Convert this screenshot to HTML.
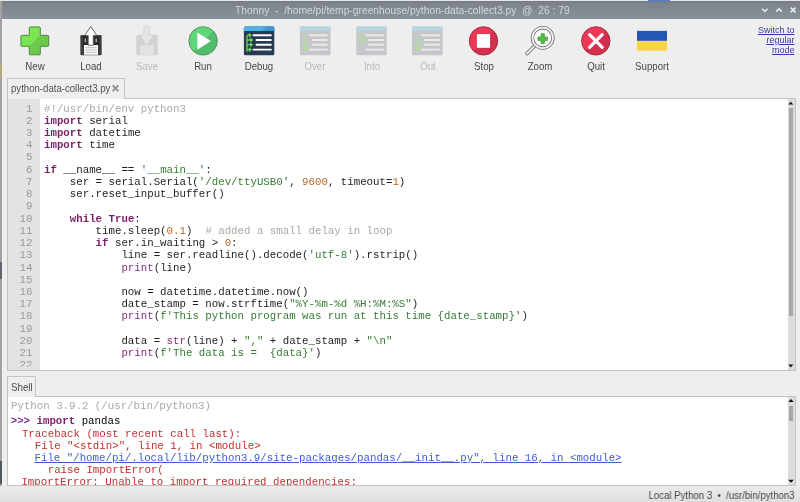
<!DOCTYPE html>
<html><head><meta charset="utf-8">
<style>
*{margin:0;padding:0;box-sizing:border-box}
html,body{width:800px;height:502px;overflow:hidden;background:#eeeeee;font-family:"Liberation Sans",sans-serif}
.abs{position:absolute}
#top{left:0;top:0;width:800px;height:1px;background:#e8e8e8}
#title{left:0;top:1px;width:800px;height:18px;background:linear-gradient(#737a82,#7c838b 12%,#8a9298)}
#title .t{position:absolute;left:234.5px;top:3.8px;font-size:10.4px;color:#d4d8dc;white-space:pre;transform:scaleX(0.99);transform-origin:0 0}
#lb{left:0;top:1px;width:2px;height:501px;background:#a2a2a2}
.lbl{position:absolute;top:60px;font-size:10.5px;color:#474747;text-align:center;width:60px;transform:scaleX(0.92)}
.dis{color:#b9b9b9}
.mono{font-family:"Liberation Mono",monospace;font-size:10.75px;white-space:pre}
#switch{position:absolute;right:5.6px;top:26.2px;font-size:9px;line-height:9.7px;color:#3a3aa4;text-align:right;text-decoration:underline;text-decoration-thickness:1px}
#tab{left:7px;top:78px;width:118px;border-top-right-radius:2px;height:21px;border:1px solid #c8c4bc;border-bottom:none;background:#efefef;z-index:2}
#tab .t{position:absolute;left:2.8px;top:3px;font-size:10.5px;color:#505050;white-space:pre;transform:scaleX(0.915);transform-origin:0 0}
#tab .x{position:absolute;left:104px;top:4px;font-size:9px;color:#8a8a8a}
#ed{left:7px;top:98px;width:789px;height:273px;border:1px solid #c6c2ba;background:#fff;overflow:hidden}
#gut{left:0;top:0;width:32px;height:272px;background:#e3e3e3}
#nums{position:absolute;left:0;top:3.5px;width:24.5px;text-align:right;color:#9a9a9a;line-height:12.23px}
#code{position:absolute;left:36px;top:3.5px;color:#1e1e1e;line-height:12.23px}
.kw{color:#7d1e68;font-weight:bold}
.st{color:#367c36}
.nu{color:#b8642a}
.cm{color:#a8a8a8}
.bi{color:#8e2e7e}
.sb{position:absolute;background:#dcdcdc}
.th{position:absolute;background:#a8a8a8}
#shtab{left:7px;top:376px;width:29px;height:21px;border:1px solid #c8c4bc;border-bottom:none;border-top-right-radius:2px;background:#efefef;z-index:2}
#shtab .t{position:absolute;left:2.7px;top:4px;font-size:10.5px;color:#4a4a4a;transform:scaleX(0.93);transform-origin:0 0}
#sh{left:7px;top:396px;width:789px;height:90px;border:1px solid #c6c2ba;background:#fff;overflow:hidden}
#shcode{position:absolute;left:4px;top:3px;line-height:12.3px}
.err{color:#c23030}
.ln{position:absolute;line-height:12.3px}
.lnk{color:#3a5fd0;text-decoration:underline}
.pr{color:#7a2a9a;font-weight:bold}
#status{position:absolute;right:5.8px;top:489px;font-size:10.5px;color:#474747;white-space:pre;transform:scaleX(0.915);transform-origin:100% 0}
</style></head><body><div id="root" style="position:absolute;left:0;top:0;width:800px;height:502px;overflow:hidden;will-change:transform">
<div id="top" class="abs"></div>
<div class="abs" style="left:648px;top:0;width:22px;height:1px;background:#4a80d8"></div>
<div id="title" class="abs"><span class="t">Thonny  -  /home/pi/temp-greenhouse/python-data-collect3.py  @  26 : 79</span></div>
<div id="lb" class="abs"></div>
<div class="abs" style="left:0;top:64px;width:2px;height:13px;background:#b4ac7c"></div>
<div class="abs" style="left:0;top:262px;width:2px;height:17px;background:#5c6672"></div>
<div class="abs" style="left:0;top:461px;width:2px;height:23px;background:#4c5c5a"></div>
<div class="abs" style="left:0;top:486px;width:800px;height:16px;background:linear-gradient(#ebebeb,#dfdfdf)"></div>

<svg class="abs" style="left:0;top:0" width="800" height="80" viewBox="0 0 800 80">
<defs>
<linearGradient id="gp" x1="0" y1="0" x2="1" y2="1"><stop offset="0.5" stop-color="#7ae553"/><stop offset="0.5" stop-color="#6cc949"/></linearGradient>
<linearGradient id="gr" x1="0" y1="0" x2="1" y2="1"><stop offset="0.5" stop-color="#60d67a"/><stop offset="0.5" stop-color="#54bd6c"/></linearGradient>
<linearGradient id="gs" x1="0" y1="0" x2="1" y2="1"><stop offset="0.5" stop-color="#ec3756"/><stop offset="0.5" stop-color="#d42f4c"/></linearGradient>
</defs>
<!-- New -->
<path d="M30.2,26.9 H39.4 Q40.3,26.9 40.3,27.799999999999997 V35.4 H47.800000000000004 Q48.7,35.4 48.7,36.3 V45.4 Q48.7,46.3 47.800000000000004,46.3 H40.3 V53.9 Q40.3,54.8 39.4,54.8 H30.2 Q29.3,54.8 29.3,53.9 V46.3 H21.799999999999997 Q20.9,46.3 20.9,45.4 V36.3 Q20.9,35.4 21.799999999999997,35.4 H29.3 V27.799999999999997 Q29.3,26.9 30.2,26.9 Z" fill="url(#gp)" stroke="#4b8a3c" stroke-width="1"/>
<!-- Load -->
<rect x="80.3" y="35" width="21.4" height="20.3" rx="1.2" fill="#474747"/>
<rect x="81.2" y="35.8" width="19.6" height="18.8" fill="#3a3a3a"/>
<rect x="83" y="36" width="16" height="9" fill="#262626"/>
<rect x="84.6" y="38.5" width="1.6" height="3.8" fill="#a8a8a8"/>
<rect x="95.4" y="38.5" width="1.6" height="3.8" fill="#a8a8a8"/>
<rect x="84" y="45" width="14" height="9.8" fill="#f6f6f6"/>
<path d="M85.5,47.6 H96.5 M85.5,50 H96.5 M85.5,52.4 H96.5" stroke="#c4c4c4" stroke-width="1"/>
<path d="M90.7,26.5 L96.9,35.6 H93.3 V45.3 H88.2 V35.6 H84.5 Z" fill="#fff" stroke="#5a5a5a" stroke-width="0.9" stroke-linejoin="round"/>
<!-- Save disabled -->
<rect x="136.3" y="35" width="21.4" height="20.3" rx="1.2" fill="#d2d2d2"/>
<rect x="140" y="45" width="14" height="9.8" fill="#e2e2e2"/>
<path d="M143.8,26.3 H149.6 V35 H153.9 L146.7,45.7 L139.9,35 H143.8 Z" fill="#e4e4e4" stroke="#cacaca" stroke-width="0.6"/>
<!-- Run -->
<circle cx="203.1" cy="40.9" r="14.2" fill="url(#gr)" stroke="#4d8c5c" stroke-width="0.9"/>
<path d="M197.3,32.6 L210.9,40.9 L197.3,49.7 Z" fill="#fff"/>
<!-- Debug -->
<rect x="243.9" y="26.4" width="30.4" height="28.8" rx="1.5" fill="#263a52"/>
<path d="M245.4,26.4 H272.8 Q274.3,26.4 274.3,27.9 V31.1 H243.9 V27.9 Q243.9,26.4 245.4,26.4 Z" fill="#4fb2ee"/>
<path d="M253.5,35.2 H270.9 M256.5,40 H270.9 M256.5,44.7 H270.9 M253.5,49.6 H270.9" stroke="#fff" stroke-width="1.9" stroke-linecap="round"/>
<path d="M247,35.5 V51.5 M247,35.2 H250.6 M247,40 H252 M247,44.7 H252 M247,49.6 H250.6" stroke="#6cd64e" stroke-width="1.3" fill="none"/>
<path d="M249.3,33.4 L251.4,35.2 L249.3,37 Z M250.6,38.2 L252.8,40 L250.6,41.8 Z M250.6,42.9 L252.8,44.7 L250.6,46.5 Z M249.3,47.8 L251.4,49.6 L249.3,51.4 Z" stroke="#6cd64e" stroke-width="0.9" fill="#6cd64e" stroke-linejoin="round"/>
<path d="M266,26.4 H272.8 Q274.3,26.4 274.3,27.9 V31.1 H262 Z" fill="#3f98d4"/>
<rect x="299.9" y="26.4" width="30.6" height="28.8" rx="1.5" fill="#c5c7ca"/>
<path d="M301.4,26.4 H329.0 Q330.5,26.4 330.5,27.9 V31.1 H299.9 V27.9 Q299.9,26.4 301.4,26.4 Z" fill="#b8d3e3"/>
<path d="M309.59999999999997,35.3 H326.9 M312.7,40 H326.9 M312.7,44.7 H326.9 M309.59999999999997,49.6 H326.9" stroke="#e9e9e9" stroke-width="1.9" stroke-linecap="round"/>
<path d="M305.5,34.5 V48" stroke="#b3dba3" stroke-width="1.7" fill="none"/><path d="M302.3,47 L308.7,47 L305.5,50.2 Z" stroke="#b3dba3" stroke-width="1.4" fill="#b3dba3" stroke-linejoin="round"/><rect x="356.2" y="26.4" width="30.6" height="28.8" rx="1.5" fill="#c5c7ca"/>
<path d="M357.7,26.4 H385.3 Q386.8,26.4 386.8,27.9 V31.1 H356.2 V27.9 Q356.2,26.4 357.7,26.4 Z" fill="#b8d3e3"/>
<path d="M365.9,35.3 H383.2 M369.0,40 H383.2 M369.0,44.7 H383.2 M365.9,49.6 H383.2" stroke="#e9e9e9" stroke-width="1.9" stroke-linecap="round"/>
<path d="M359.8,34.3 V39.9 H364" stroke="#b3dba3" stroke-width="1.7" fill="none"/><path d="M362,36.8 L365.2,40 L362,43.2" stroke="#b3dba3" stroke-width="1.7" fill="none" stroke-linecap="round"/><rect x="412" y="26.4" width="30.6" height="28.8" rx="1.5" fill="#c5c7ca"/>
<path d="M413.5,26.4 H441.1 Q442.6,26.4 442.6,27.9 V31.1 H412 V27.9 Q412,26.4 413.5,26.4 Z" fill="#b8d3e3"/>
<path d="M421.7,35.3 H439 M424.8,40 H439 M424.8,44.7 H439 M421.7,49.6 H439" stroke="#e9e9e9" stroke-width="1.9" stroke-linecap="round"/>
<path d="M423,40 H417.7 V48" stroke="#b3dba3" stroke-width="1.7" fill="none"/><path d="M414.5,47 L420.9,47 L417.7,50.2 Z" stroke="#b3dba3" stroke-width="1.4" fill="#b3dba3" stroke-linejoin="round"/>
<!-- Stop -->
<circle cx="483.5" cy="40.9" r="14.2" fill="url(#gs)" stroke="#9a2a3c" stroke-width="0.9"/>
<rect x="476.9" y="34.1" width="13.2" height="13.7" fill="#fff"/>
<!-- Zoom -->
<path d="M535,45.5 L527,53.5" stroke="#6a6a6a" stroke-width="3.6" stroke-linecap="round"/>
<path d="M535,45.5 L527,53.5" stroke="#f0f0f0" stroke-width="1.8" stroke-linecap="round"/>
<circle cx="542.7" cy="37.9" r="10.2" fill="none" stroke="#6a6a6a" stroke-width="3.4"/>
<circle cx="542.7" cy="37.9" r="10.2" fill="none" stroke="#f4f4f4" stroke-width="1.8"/>
<circle cx="542.7" cy="37.9" r="8.2" fill="#fafafa"/>
<path d="M541,33.8 H544.4 V37 H547.5 V40.4 H544.4 V43.5 H541 V40.4 H537.9 V37 H541 Z" fill="#4ac43a" stroke="#3a8a30" stroke-width="0.6"/>
<!-- Quit -->
<circle cx="595.8" cy="40.9" r="14.2" fill="url(#gs)" stroke="#9a2a3c" stroke-width="0.9"/>
<path d="M589.6,34.6 L602.2,47.4 M602.2,34.6 L589.6,47.4" stroke="#fff" stroke-width="3.2" stroke-linecap="round"/>
<!-- Support -->
<rect x="637" y="30.9" width="30" height="10" fill="#2456b4"/>
<rect x="637" y="40.9" width="30" height="9.9" fill="#f8d546"/>
<!-- window controls -->
<path d="M762,8.7 L764.8,11.5 L767.6,8.7" stroke="#eceef0" stroke-width="1.5" fill="none"/>
<path d="M776.2,11.6 L779,8.8 L781.8,11.6" stroke="#eceef0" stroke-width="1.5" fill="none"/>
<path d="M790.8,7.6 L795.6,12.4 M795.6,7.6 L790.8,12.4" stroke="#eceef0" stroke-width="1.5" fill="none"/>
</svg>
<!-- toolbar labels -->
<div class="lbl" style="left:4.5px">New</div>
<div class="lbl" style="left:60.8px">Load</div>
<div class="lbl dis" style="left:117px">Save</div>
<div class="lbl" style="left:173px">Run</div>
<div class="lbl" style="left:229px">Debug</div>
<div class="lbl dis" style="left:285px">Over</div>
<div class="lbl dis" style="left:341.5px">Into</div>
<div class="lbl dis" style="left:397.5px">Out</div>
<div class="lbl" style="left:453.6px">Stop</div>
<div class="lbl" style="left:510px">Zoom</div>
<div class="lbl" style="left:566px">Quit</div>
<div class="lbl" style="left:621.7px">Support</div>
<div id="switch">Switch to<br>regular<br>mode</div>

<div id="tab" class="abs"><span class="t">python-data-collect3.py</span><svg class="abs" style="left:0;top:0" width="118" height="21"><path d="M104.6,6.3 L110.4,12.1 M110.4,6.3 L104.6,12.1" stroke="#8e8e8e" stroke-width="1.8"/></svg></div>
<div id="ed" class="abs">
 <div id="gut" class="abs"></div>
 <div class="abs" style="left:0;top:0;width:779px;height:267.5px;overflow:hidden">
 <div id="nums" class="mono">1
2
3
4
5
6
7
8
9
10
11
12
13
14
15
16
17
18
19
20
21
22</div>
 <div id="code" class="mono"><span class="cm">#!/usr/bin/env python3</span>
<span class="kw">import</span> serial
<span class="kw">import</span> datetime
<span class="kw">import</span> time

<span class="kw">if</span> __name__ == <span class="st">'__main__'</span>:
    ser = serial.Serial(<span class="st">'/dev/ttyUSB0'</span>, <span class="nu">9600</span>, timeout=<span class="nu">1</span>)
    ser.reset_input_buffer()

    <span class="kw">while</span> <span class="kw">True</span>:
        time.sleep(<span class="nu">0.1</span>)  <span class="cm"># added a small delay in loop</span>
        <span class="kw">if</span> ser.in_waiting &gt; <span class="nu">0</span>:
            line = ser.readline().decode(<span class="st">'utf-8'</span>).rstrip()
            <span class="bi">print</span>(line)

            now = datetime.datetime.now()
            date_stamp = now.strftime(<span class="st">"%Y-%m-%d %H:%M:%S"</span>)
            <span class="bi">print</span>(<span class="st">f'This python program was run at this time {date_stamp}'</span>)

            data = <span class="bi">str</span>(line) + <span class="st">","</span> + date_stamp + <span class="st">"\n"</span>
            <span class="bi">print</span>(<span class="st">f'The data is =  {data}'</span>)
</div>
 </div>
 <div class="sb" style="left:779.5px;top:0;width:7.5px;height:271px"></div>
 <div class="th" style="left:781px;top:9.3px;width:3.8px;height:207.5px"></div>
 <svg class="abs" style="left:0;top:0" width="787" height="271"><path d="M780.3,5.6 L782.8,2.8 L785.3,5.6 Z M780.3,265.5 L782.8,268.5 L785.3,265.5 Z" fill="#111"/></svg>
</div>

<div id="shtab" class="abs"><span class="t">Shell</span></div>
<div id="sh" class="abs">
 <div class="mono ln" style="top:3.2px;left:3px"><span class="cm">Python 3.9.2 (/usr/bin/python3)</span></div>
 <div class="mono ln" style="top:18.2px;left:2.7px"><span class="pr">&gt;&gt;&gt;</span> <span class="kw">import</span> pandas</div>
 <div class="mono ln err" style="top:30.5px;left:13.9px">Traceback (most recent call last):</div>
 <div class="mono ln err" style="top:42.8px;left:13.9px">  File "&lt;stdin&gt;", line 1, in &lt;module&gt;</div>
 <div class="mono ln" style="top:55.1px;left:26.5px"><span class="lnk">File "/home/pi/.local/lib/python3.9/site-packages/pandas/__init__.py", line 16, in &lt;module&gt;</span></div>
 <div class="mono ln err" style="top:67.4px;left:13.9px">    raise ImportError(</div>
 <div class="mono ln err" style="top:78.9px;left:13.4px">ImportError: Unable to import required dependencies:</div>
 <div class="sb" style="left:779.5px;top:0;width:7.5px;height:88px"></div>
 <div class="th" style="left:781.3px;top:9px;width:3.4px;height:14.5px"></div>
 <svg class="abs" style="left:0;top:0" width="787" height="88"><path d="M780.2,5 L783,2 L785.8,5 Z M780.2,82.7 L783,85.7 L785.8,82.7 Z" fill="#111"/></svg>
</div>
<div id="status">Local Python 3  •  /usr/bin/python3</div>
</div></body></html>
